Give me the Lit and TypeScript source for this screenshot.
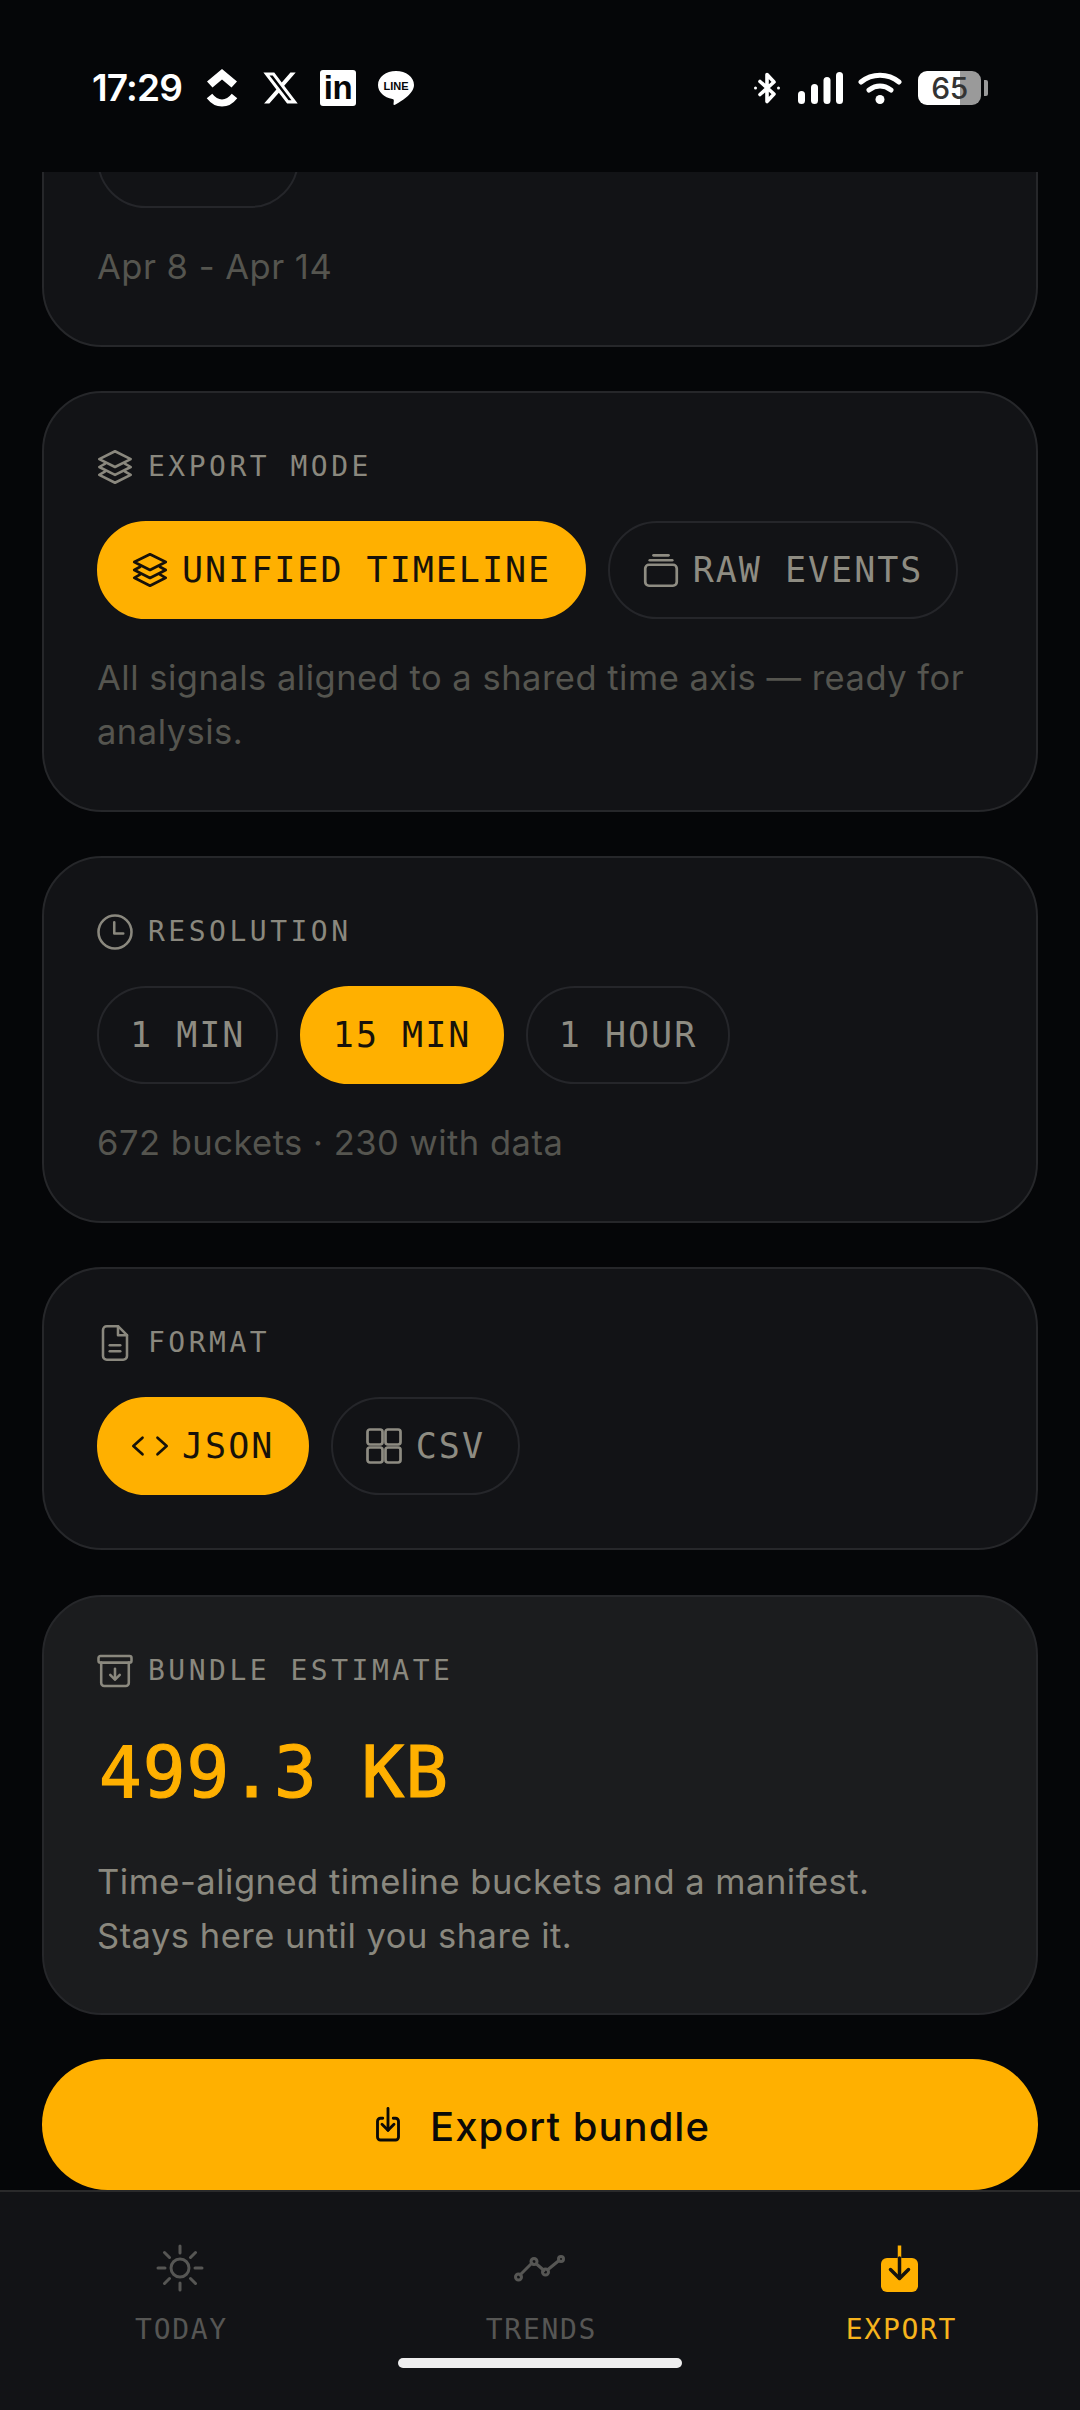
import { LitElement, html, css, svg } from "lit";
import { customElement } from "lit/decorators.js";

const ic = (cls: string, body: unknown, vb = "0 0 24 24") =>
  html`<svg class="ic ${cls}" viewBox=${vb} fill="none" stroke="currentColor" stroke-linecap="round" stroke-linejoin="round">${body}</svg>`;

const layers = svg`<path d="M12 1.500l10.500 5.200L12 12 1.500 6.700z"/><path d="M5.500 9.800 1.500 12 12 17.300 22.500 12l-4-2.200"/><path d="M5.500 14.900 1.500 17.200 12 22.500l10.500-5.300-4-2.300"/>`;
const stack = svg`<rect x="1.500" y="8.500" width="21" height="14" rx="2.500"/><path d="M4.500 5.500h15"/><path d="M7 2.200h10"/>`;
const clock = svg`<circle cx="12" cy="12" r="11"/><path d="M11.500 5.500v7.500h6"/>`;
const file = svg`<path d="M14 .8H6.500A2.500 2.500 0 0 0 4 3.300v17.400a2.500 2.500 0 0 0 2.500 2.500h11a2.500 2.500 0 0 0 2.500-2.500V6.800z"/><path d="M14 .8v6h6"/><path d="M8.500 13.500h7"/><path d="M8.500 17.500h7"/>`;
const code = svg`<path d="M7 6.500.9 12 7 17.500"/><path d="M17 6.500 23.100 12 17 17.500"/>`;
const grid = svg`<rect x="1" y="1" width="10" height="10" rx="1.600"/><rect x="13" y="1" width="10" height="10" rx="1.600"/><rect x="1" y="13" width="10" height="10" rx="1.600"/><rect x="13" y="13" width="10" height="10" rx="1.600"/>`;
const archive = svg`<rect x="1" y="2" width="22" height="4.400" rx="1.300"/><path d="M2.800 6.400V20a2 2 0 0 0 2 2h14.400a2 2 0 0 0 2-2V6.400"/><path d="M12 10.500v7"/><path d="M8.800 14.600 12 17.800l3.200-3.200"/>`;
const dlBox = svg`<path d="M8.500 7.500H7A2 2 0 0 0 5 9.500V20a2 2 0 0 0 2 2h10a2 2 0 0 0 2-2V9.500a2 2 0 0 0-2-2h-1.500"/><path d="M12 1v14.500"/><path d="M8 11.500l4 4 4-4"/>`;
const sun = svg`<circle cx="24" cy="24" r="9"/><path d="M24 2v7M24 39v7M2 24h7M39 24h7M8.500 8.500l5 5M34.500 34.500l5 5M8.500 39.500l5-5M34.500 13.500l5-5"/>`;
const trend = svg`<path d="M4 31 16 19M20.500 20 28 26.500M32 25.500 43 16.500"/><circle cx="2.500" cy="33" r="3"/><circle cx="18" cy="17.500" r="3"/><circle cx="29.500" cy="28" r="3"/><circle cx="45" cy="15" r="2.500"/>`;
const exportNav = svg`<rect x="5" y="14" width="37" height="34" rx="6" fill="#ffb000" stroke="none"/><path d="M23.500 1.500V14" stroke="#ffb000" stroke-width="3.500" stroke-linecap="butt"/><path d="M23.500 14v20" stroke="#15130e" stroke-width="3.500"/><path d="M14.500 25.500l9 9 9-9" stroke="#15130e" stroke-width="3.500"/>`;

@customElement("app-root")
export class AppRoot extends LitElement {
  static styles = css`
    :host {
      display: flex;
      flex-direction: column;
      width: 1080px;
      height: 2410px;
      background: #050608;
      overflow: hidden;
      position: relative;
      font-family: Inter, "Liberation Sans", sans-serif;
    }
    .ic { display: block; flex: none; width: 36px; height: 36px; stroke-width: 1.7; overflow: visible; }

    .status {
      height: 172px;
      flex: none;
      box-sizing: border-box;
      padding: 68px 92px 0;
      display: flex;
      align-items: flex-start;
      justify-content: space-between;
      color: #fff;
      background: #050608;
    }
    .sl, .sr { display: flex; align-items: center; height: 40px; }
    .time { font: 600 37px/40px Inter, sans-serif; width: 89px; letter-spacing: -0.8px; white-space: nowrap; margin-right: 25px; }
    .cu { width: 32px; height: 38px; margin-right: 25px; }
    .xl { width: 35px; height: 34px; margin-right: 22px; }
    .li {
      width: 36px; height: 36px; margin-right: 22px;
      background: #fff; border-radius: 3px; color: #050608;
      font: 700 33px/35px "Liberation Sans", sans-serif;
      letter-spacing: -0.5px;
      text-align: center;
    }
    .line { width: 36px; height: 36px; }
    .bt { width: 28px; height: 32px; margin-right: 17px; }
    .sig { width: 45px; height: 32px; margin-right: 15px; }
    .wifi { width: 44px; height: 32px; margin-right: 16px; }
    .bat {
      width: 63px; height: 34px; border-radius: 9px;
      background: linear-gradient(90deg, #fff 0 42px, #9a9a9a 42px);
      color: #333;
      font: 500 30px/34px Inter, sans-serif;
      letter-spacing: -0.5px;
      text-align: center;
    }
    .tip { width: 4px; height: 16px; margin-left: 3px; border-radius: 0 2px 2px 0; background: #9a9a9a; }

    main {
      flex: 1;
      min-height: 0;
      overflow: hidden;
      padding: 0 42px;
      display: flex;
      flex-direction: column;
      gap: 44px;
    }
    .card {
      flex: none;
      box-sizing: border-box;
      background: #121316;
      border: 2px solid #26272a;
      border-radius: 60px;
      padding: 53px;
    }
    .first { margin-top: -132px; padding-top: 68px; }
    .card.hi { background: #1b1c1e; margin-top: 1px; }

    .label {
      display: flex;
      align-items: center;
      gap: 15px;
      height: 40px;
      margin-top: 1px;
      color: #8a887e;
      font: 400 28px/40px "DejaVu Sans Mono", monospace;
      letter-spacing: 3.500px;
      white-space: nowrap;
    }
    .pills { display: flex; gap: 21.500px; margin-top: 34px; }
    .first .pills { margin-top: 0; }
    .pill {
      box-sizing: border-box;
      height: 98px;
      padding: 0 33px;
      display: flex;
      align-items: center;
      gap: 14px;
      border: 2px solid #25262a;
      border-radius: 49px;
      color: #8e8c82;
      font: 400 35px/1 "DejaVu Sans Mono", monospace;
      letter-spacing: 2px;
      white-space: nowrap;
    }
    .pill.plain { padding: 0 31px; }
    .pill.ghost { width: 202px; }
    .pill.on { background: #ffb000; border-color: #ffb000; color: #17120a; }
    .pill .ic { stroke-width: 1.8; }
    .desc {
      margin: 32px 0 -2px;
      color: #55554f;
      font: 400 34.500px/54px Inter, sans-serif;
      letter-spacing: 0.500px;
    }
    .num {
      color: #ffb000;
      font: 500 71px/90px "DejaVu Sans Mono", monospace;
      -webkit-text-stroke: 1.200px #ffb000;
      letter-spacing: 1px;
      margin: 37px 0 37px 2px;
      white-space: nowrap;
    }
    .hi .desc { margin: 0 0 -3px; color: #8a887e; }

    .cta {
      flex: none;
      height: 131px;
      border-radius: 66px;
      background: #ffb000;
      color: #0b0a08;
      display: flex;
      align-items: center;
      justify-content: center;
      gap: 24px;
      font: 500 40px/1 Inter, sans-serif;
      letter-spacing: 1px;
    }
    .cta span { padding-top: 4px; }
    .cta .ic { stroke-width: 1.9; }

    nav {
      flex: none;
      height: 220px;
      box-sizing: border-box;
      border-top: 2px solid #2a2a2b;
      background: #121316;
      padding-top: 52px;
      display: grid;
      grid-template-columns: repeat(3, 1fr);
    }
    .tab {
      display: flex;
      flex-direction: column;
      align-items: center;
      gap: 21px;
      color: #565654;
      font: 400 28px/34px "DejaVu Sans Mono", monospace;
      letter-spacing: 1.700px;
    }
    .tab span { margin-left: 3px; }
    .tab .ic { width: 48px; height: 48px; stroke-width: 3; }
    .tab.on { color: #f6b31d; }
    .home {
      position: absolute;
      left: 398px;
      bottom: 42px;
      width: 284px;
      height: 10px;
      border-radius: 5px;
      background: #eee;
    }
  `;

  private pill(text: string, on = false, icon?: unknown) {
    return html`<div class="pill ${on ? "on" : ""} ${icon ? "" : "plain"}">${icon ? ic("", icon) : null}<span>${text}</span></div>`;
  }

  render() {
    return html`
      <header class="status">
        <div class="sl">
          <span class="time">17:29</span>
          <svg class="cu" viewBox="0 0 32 38" fill="#fff"><path d="M16 0 31 12.500 25.500 18.500 16 10.500 6.500 18.500 1 12.500z"/><path d="M3.500 27c3.500 4.500 7.500 7 12.500 7s9-2.500 12.500-7" fill="none" stroke="#fff" stroke-width="7"/></svg>
          <svg class="xl" viewBox="1 2 22 20" fill="#fff"><path d="M18.244 2.250h3.308l-7.227 8.260 8.502 11.240H16.170l-5.214-6.817L4.990 21.750H1.680l7.730-8.835L1.254 2.250H8.080l4.713 6.231zm-1.161 17.520h1.833L7.084 4.126H5.117z"/></svg>
          <span class="li">in</span>
          <svg class="line" viewBox="0 0 36 36"><path fill="#fff" d="M18 1C8 1 0 7 0 15c0 7 6 12.500 14.500 14 .8.200 1.500.8 1.300 2l-.3 3c0 .8.800 1.200 1.500.800C22 32 36 24 36 15 36 7 28 1 18 1z"/><text x="18" y="20" text-anchor="middle" font-family="Liberation Sans" font-weight="700" font-size="11" fill="#050608">LINE</text></svg>
        </div>
        <div class="sr">
          <svg class="bt" viewBox="0 0 28 32" fill="none" stroke="#fff" stroke-width="3.600" stroke-linecap="round" stroke-linejoin="round"><path d="M7 9.500 21 22l-7 7.500V2.500L21 10 7 22.500"/><circle cx="2.500" cy="16" r="1.500" fill="#fff" stroke="none"/><circle cx="25.500" cy="16" r="1.500" fill="#fff" stroke="none"/></svg>
          <svg class="sig" viewBox="0 0 45 32" fill="#fff"><rect x="0" y="19" width="7" height="13" rx="3.500"/><rect x="13" y="12" width="7" height="20" rx="3.500"/><rect x="25.500" y="5" width="7" height="27" rx="3.500"/><rect x="38" y="0" width="7" height="32" rx="3.500"/></svg>
          <svg class="wifi" viewBox="0 0 44 32" fill="none" stroke="#fff" stroke-linecap="round"><path d="M3 10C14 1 30 1 41 10" stroke-width="5"/><path d="M11 18c7-5 15-5 22 0" stroke-width="5"/><circle cx="22" cy="27.500" r="4.500" fill="#fff" stroke="none"/></svg>
          <div class="bat">65</div>
          <div class="tip"></div>
        </div>
      </header>

      <main>
        <section class="card first">
          <div class="pills"><div class="pill ghost"></div></div>
          <p class="desc">Apr 8 - Apr 14</p>
        </section>

        <section class="card">
          <div class="label">${ic("", layers)}<span>EXPORT MODE</span></div>
          <div class="pills">
            ${this.pill("UNIFIED TIMELINE", true, layers)}
            ${this.pill("RAW EVENTS", false, stack)}
          </div>
          <p class="desc">All signals aligned to a shared time axis — ready for analysis.</p>
        </section>

        <section class="card">
          <div class="label">${ic("", clock)}<span>RESOLUTION</span></div>
          <div class="pills">
            ${this.pill("1 MIN")}
            ${this.pill("15 MIN", true)}
            ${this.pill("1 HOUR")}
          </div>
          <p class="desc">672 buckets · 230 with data</p>
        </section>

        <section class="card">
          <div class="label">${ic("", file)}<span>FORMAT</span></div>
          <div class="pills">
            ${this.pill("JSON", true, code)}
            ${this.pill("CSV", false, grid)}
          </div>
        </section>

        <section class="card hi">
          <div class="label">${ic("", archive)}<span>BUNDLE ESTIMATE</span></div>
          <div class="num">499.3 KB</div>
          <p class="desc">Time-aligned timeline buckets and a manifest.<br />Stays here until you share it.</p>
        </section>

        <div class="cta">${ic("", dlBox)}<span>Export bundle</span></div>
      </main>

      <nav>
        <div class="tab">${ic("", sun, "0 0 48 48")}<span>TODAY</span></div>
        <div class="tab">${ic("", trend, "0 0 48 48")}<span>TRENDS</span></div>
        <div class="tab on">${ic("", exportNav, "0 0 48 48")}<span>EXPORT</span></div>
      </nav>
      <div class="home"></div>
    `;
  }
}
